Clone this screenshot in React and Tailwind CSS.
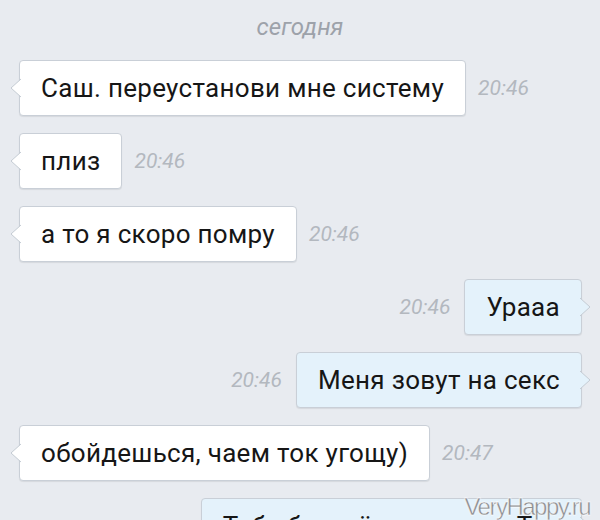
import React from "react";

const messages = [
  { out: false, text: "Саш. переустанови мне систему", time: "20:46" },
  { out: false, text: "плиз", time: "20:46" },
  { out: false, text: "а то я скоро помру", time: "20:46" },
  { out: true, text: "Урааа", time: "20:46" },
  { out: true, text: "Меня зовут на секс", time: "20:46" },
  { out: false, text: "обойдешься, чаем ток угощу)", time: "20:47" },
  { out: true, text: "Тебе бы всё шутить а я Так", time: "" },
];

const Tail = ({ out }) => (
  <svg
    width="13"
    height="22"
    viewBox="0 0 13 22"
    className={out ? "absolute -right-[11px] top-1/2 -translate-y-1/2" : "absolute -left-[11px] top-1/2 -translate-y-1/2"}
  >
    {out ? (
      <path d="M1 2 L11 11 L1 20" fill="#e4f2fb" stroke="#c5ccd4" strokeWidth="1" strokeLinejoin="round" />
    ) : (
      <path d="M12 2 L2 11 L12 20" fill="#ffffff" stroke="#c5ccd4" strokeWidth="1" strokeLinejoin="round" />
    )}
  </svg>
);

const Bubble = ({ m }) => (
  <div
    className={`relative h-[56px] flex items-center px-[21px] rounded-[4px] border border-[#c9cfd7] shadow-[0_1px_1px_rgba(0,0,0,0.08)] whitespace-nowrap text-[26px] tracking-[0.3px] text-[#161616] ${
      m.out ? "bg-[#e4f2fb]" : "bg-white"
    }`}
  >
    <Tail out={m.out} />
    <span className="relative">{m.text}</span>
  </div>
);

const Time = ({ t }) => (
  <span className="text-[21px] italic text-[#b3b8bf] pt-[2px]">{t}</span>
);

export default function App() {
  return (
    <div
      className="relative w-[600px] h-[520px] overflow-hidden bg-[#e8ebf0]"
      style={{ fontFamily: "Roboto, 'Noto Sans', sans-serif" }}
    >
      <div className="pt-[11px] text-center text-[24px] italic text-[#9da2aa] leading-[32px]">
        сегодня
      </div>
      <div className="mt-[17px] flex flex-col gap-[17px]">
        {messages.map((m, i) =>
          m.out ? (
            <div key={i} className="flex items-center justify-end gap-[14px] pr-[18px]">
              {m.time && <Time t={m.time} />}
              <Bubble m={m} />
            </div>
          ) : (
            <div key={i} className="flex items-center gap-[12px] pl-[19px]">
              <Bubble m={m} />
              <Time t={m.time} />
            </div>
          )
        )}
      </div>
      <div
        className="absolute right-[10px] bottom-[-5px] text-[24px] text-[#8d8f93] tracking-[-1.5px]"
        style={{ fontFamily: "'Liberation Sans', Arial, sans-serif", WebkitTextStroke: "0.4px #ffffff", textShadow: "0 0 2px #fff" }}
      >
        VeryHappy.ru
      </div>
    </div>
  );
}
